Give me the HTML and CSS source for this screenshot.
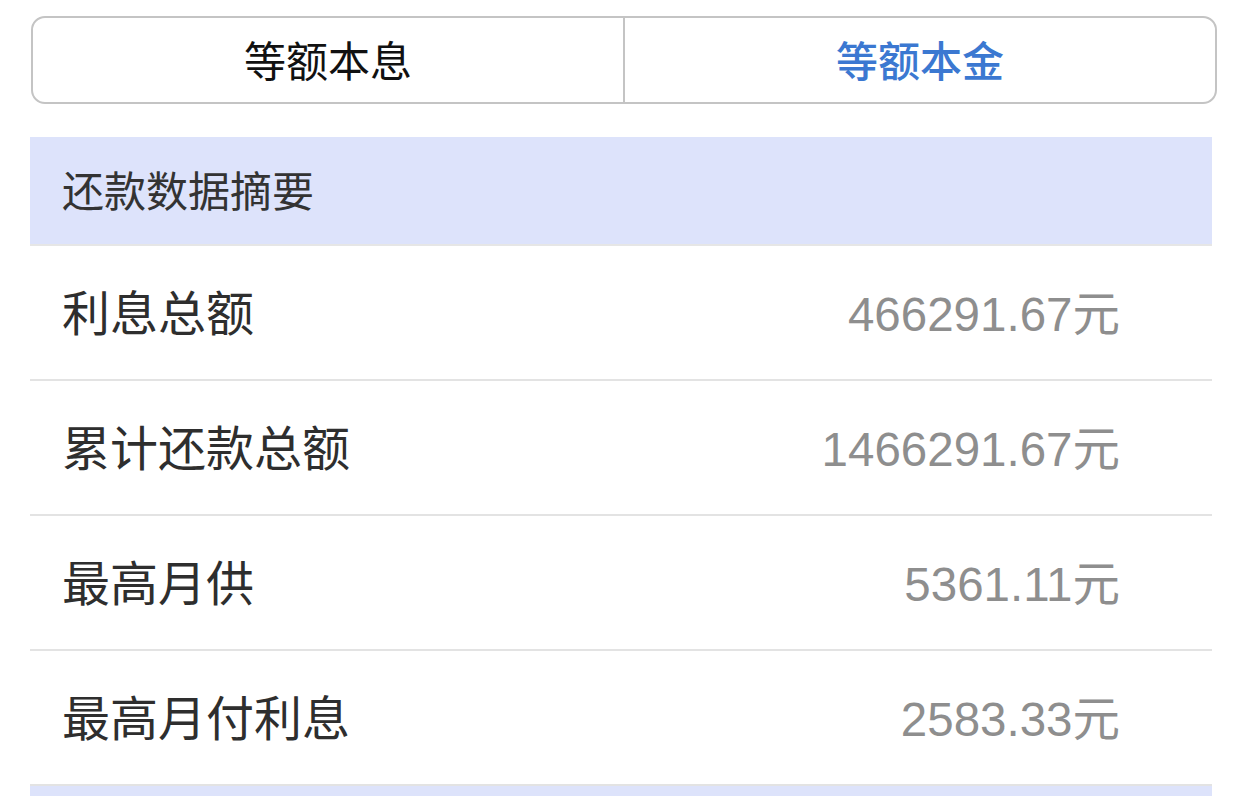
FILE: index.html
```html
<!DOCTYPE html>
<html lang="zh-CN">
<head>
  <meta charset="UTF-8" />
  <meta name="viewport" content="width=device-width, initial-scale=1.0"/>
  <title>还款数据摘要</title>
  <link rel="stylesheet" href="styles.css">
</head>
<body>
  <div class="segment">
    <div class="segment-item">等额本息</div>
    <div class="segment-item active">等额本金</div>
  </div>

  <div class="summary">
    <div class="summary-head">还款数据摘要</div>
    <div class="summary-row">
      <span class="label">利息总额</span>
      <span class="value">466291.67元</span>
    </div>
    <div class="summary-row">
      <span class="label">累计还款总额</span>
      <span class="value">1466291.67元</span>
    </div>
    <div class="summary-row">
      <span class="label">最高月供</span>
      <span class="value">5361.11元</span>
    </div>
    <div class="summary-row">
      <span class="label">最高月付利息</span>
      <span class="value">2583.33元</span>
    </div>
    <div class="summary-head next"></div>
  </div>
</body>
</html>
```

FILE: styles.css
```css
body {
  margin: 0;
  padding-top: 16px;
  background: #fff;
  font-family: "Noto Sans CJK SC", "Noto Sans", sans-serif;
  overflow: hidden;
}
.segment {
  display: flex;
  margin: 0 25px 0 31px;
  height: 88px;
  box-sizing: border-box;
  border: 2px solid #c4c4c4;
  border-radius: 14px;
  overflow: hidden;
}
.segment-item {
  flex: 1;
  display: flex;
  align-items: center;
  justify-content: center;
  padding-bottom: 4px;
  font-size: 42px;
  color: #111;
}
.segment-item + .segment-item {
  border-left: 2px solid #c4c4c4;
}
.segment-item.active {
  color: #3b78d1;
  font-weight: 500;
}
.summary {
  margin: 33px 30px 0 30px;
}
.summary-head {
  height: 109px;
  box-sizing: border-box;
  background: #dde3fb;
  border-bottom: 2px solid #e6e6e6;
  display: flex;
  align-items: center;
  padding: 0 0 5px 32px;
  font-size: 42px;
  color: #333;
}
.summary-head.next {
  border-bottom: none;
}
.summary-row {
  height: 135px;
  box-sizing: border-box;
  border-bottom: 2px solid #e3e3e3;
  display: flex;
  align-items: center;
  justify-content: space-between;
  padding: 0 92px 5px 32px;
}
.label {
  font-size: 48px;
  color: #2e2e2e;
}
.value {
  font-family: "Liberation Sans", "Noto Sans CJK SC", sans-serif;
  font-size: 47.5px;
  color: #8e8e8e;
}
```
